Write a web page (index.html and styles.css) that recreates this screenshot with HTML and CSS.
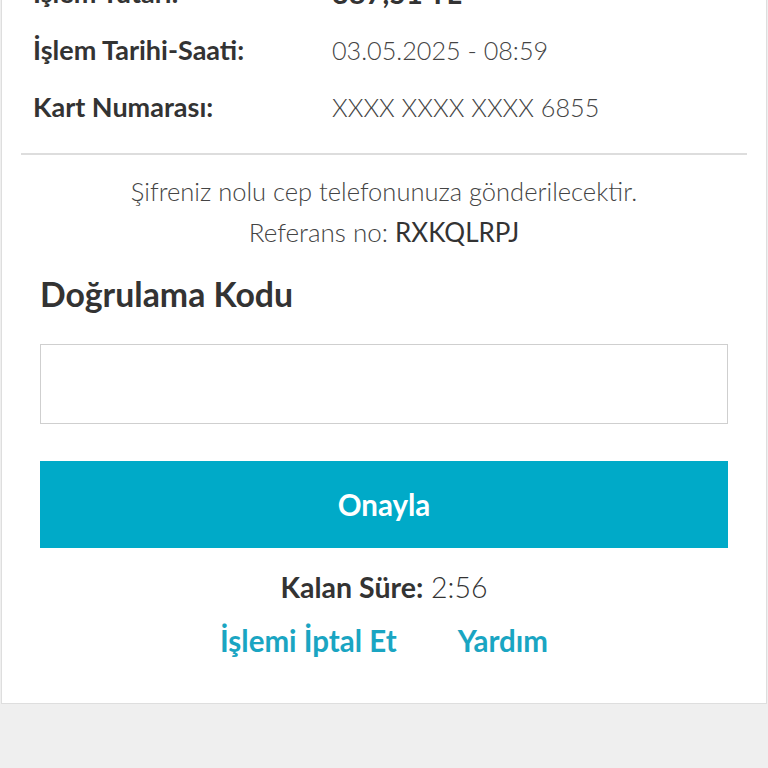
FILE: index.html
```html
<!DOCTYPE html>
<html lang="tr">
<head>
<meta charset="utf-8">
<title>Doğrulama</title>
<link rel="stylesheet" href="styles.css">
</head>
<body>
<div class="card">
  <div class="info">
    <div class="row"><span class="label">İşlem Tutarı:</span><span class="value strong">387,51 TL</span></div>
    <div class="row"><span class="label">İşlem Tarihi-Saati:</span><span class="value">03.05.2025 - 08:59</span></div>
    <div class="row"><span class="label">Kart Numarası:</span><span class="value">XXXX XXXX XXXX 6855</span></div>
  </div>
  <div class="form">
    <p class="note">Şifreniz nolu cep telefonunuza gönderilecektir.</p>
    <p class="note ref">Referans no: <b>RXKQLRPJ</b></p>
    <h2 class="title">Doğrulama Kodu</h2>
    <input class="code" type="text" aria-label="Doğrulama Kodu">
    <button class="submit" type="button">Onayla</button>
    <p class="timer"><b>Kalan Süre:</b> 2:56</p>
    <div class="links">
      <a href="#" class="link">İşlemi İptal Et</a>
      <a href="#" class="link">Yardım</a>
    </div>
  </div>
</div>
</body>
</html>
```
FILE: styles.css
```css
html, body {
  margin: 0;
  padding: 0;
  background: #efefef;
  font-family: Lato, "Noto Sans", sans-serif;
  color: #333;
}
.card {
  margin: -36px 1px 0;
  background: #fff;
  border: 1px solid #dedede;
  border-top: none;
  padding: 0 19px 45px;
}
.info {
  border-bottom: 2px solid #dddddd;
  padding: 0 0 18px;
}
.row {
  display: grid;
  grid-template-columns: 299px 1fr;
  padding-left: 12px;
  height: 57px;
  align-items: center;
}
.label {
  font-size: 27px;
  font-weight: 700;
  color: #333;
}
.value {
  font-size: 25.2px;
  font-weight: 300;
  color: #444;
}
.value.strong {
  font-size: 29px;
  font-weight: 700;
  color: #333;
}
.form {
  padding: 16px 19px 0;
  display: flex;
  flex-direction: column;
  align-items: stretch;
}
.note {
  margin: 0;
  text-align: center;
  font-size: 25.5px;
  font-weight: 300;
  color: #444;
  line-height: 41px;
}
.note.ref {
  font-size: 26px;
}
.note b {
  font-weight: 400;
  color: #333;
}
.title {
  margin: 21px 0 0;
  font-size: 33.8px;
  font-weight: 700;
  color: #333;
  line-height: 40px;
}
.code {
  margin: 30px 0 0;
  height: 80px;
  box-sizing: border-box;
  border: 1px solid #cfcfcf;
  background: #fff;
  font-size: 24px;
  padding: 0 12px;
  border-radius: 0;
}
.submit {
  margin: 37px 0 0;
  height: 87px;
  border: none;
  background: #00aac8;
  color: #fff;
  font-family: inherit;
  font-size: 29.5px;
  font-weight: 700;
  cursor: pointer;
}
.timer {
  margin: 22px 0 0;
  text-align: center;
  font-size: 28.5px;
  font-weight: 300;
  color: #333;
  line-height: 34px;
}
.timer b {
  font-weight: 700;
}
.links {
  margin-top: 20px;
  display: flex;
  justify-content: center;
  gap: 61px;
}
.link {
  font-size: 29.5px;
  font-weight: 700;
  color: #1aa5c2;
  text-decoration: none;
  line-height: 34px;
}
```
